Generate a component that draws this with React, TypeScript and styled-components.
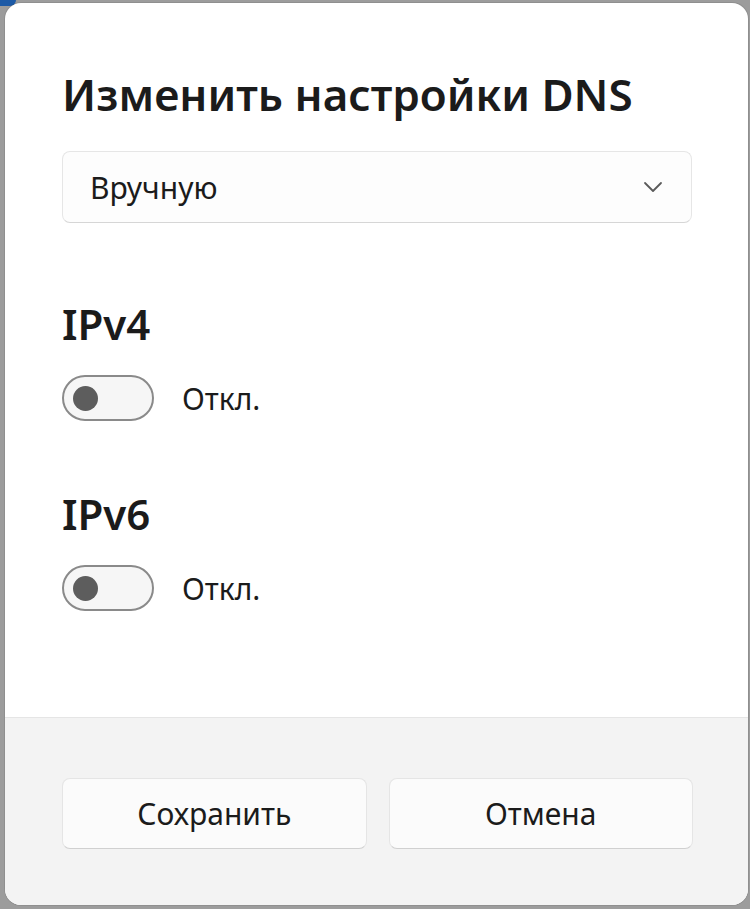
import React from "react";
import styled, {createGlobalStyle} from "styled-components";

const GlobalStyle = createGlobalStyle`
    html, body {
        margin: 0;
        padding: 0;
        width: 750px;
        height: 909px;
        overflow: hidden;
        background: #9c9c9c;
        font-family: "Noto Sans", "Open Sans", sans-serif;
    }
`;

const Backdrop = styled.div`
    position: relative;
    width: 750px;
    height: 909px;
    padding: 3px 2px 4px 5px;
    box-sizing: border-box;
`;

// bit of the blue window behind the dialog, top left
const BehindCorner = styled.div`
    position: absolute;
    left: 0;
    top: 0;
    width: 16px;
    height: 6px;
    background: #1d5aa6;
    border-bottom-right-radius: 8px;
`;

const Dialog = styled.div`
    position: relative;
    display: flex;
    flex-direction: column;
    height: 100%;
    background: #ffffff;
    border-radius: 16px;
    overflow: hidden;
    box-shadow: 0 0 0 1px rgba(0, 0, 0, 0.08);
`;

const Body = styled.div`
    flex: 1;
    display: flex;
    flex-direction: column;
    padding: 0 56px 0 57px;
`;

const Title = styled.h1`
    margin: 64px 0 0;
    font-size: 44px;
    font-weight: 600;
    line-height: 54px;
    color: #1b1b1b;
`;

const Select = styled.div`
    margin-top: 30px;
    height: 72px;
    display: flex;
    align-items: center;
    justify-content: space-between;
    padding: 0 28px 0 27px;
    box-sizing: border-box;
    background: #fdfdfd;
    border: 1px solid #e6e6e6;
    border-bottom-color: #d6d6d6;
    border-radius: 8px;
    font-size: 30px;
    color: #1b1b1b;
`;

const Section = styled.div`
    display: flex;
    flex-direction: column;
    margin-top: ${(p: {$top: number}) => p.$top}px;
`;

const Subtitle = styled.h2`
    margin: 0;
    font-size: 42px;
    font-weight: 600;
    line-height: 54px;
    color: #1b1b1b;
`;

const ToggleRow = styled.div`
    display: flex;
    align-items: center;
    gap: 28px;
    margin-top: 24px;
    font-size: 30px;
    color: #1b1b1b;
`;

const Track = styled.div`
    width: 92px;
    height: 46px;
    box-sizing: border-box;
    border: 2px solid #8a8a8a;
    border-radius: 23px;
    background: #f6f6f6;
    display: flex;
    align-items: center;
    padding-left: 9px;
`;

const Knob = styled.div`
    width: 25px;
    height: 25px;
    border-radius: 50%;
    background: #5d5d5d;
`;

const Footer = styled.div`
    height: 188px;
    box-sizing: border-box;
    background: #f3f3f3;
    border-top: 1px solid #e5e5e5;
    display: grid;
    grid-template-columns: 1fr 1fr;
    gap: 22px;
    padding: 60px 55px 0 57px;
    align-items: start;
`;

const Button = styled.button`
    height: 71px;
    background: #fbfbfb;
    border: 1px solid #e5e5e5;
    border-bottom-color: #d0d0d0;
    border-radius: 8px;
    font-family: inherit;
    font-size: 30px;
    color: #1b1b1b;
`;

const Chevron = () => (
    <svg width="20" height="12" viewBox="0 0 20 12" fill="none">
        <path d="M2 2l8 8 8-8" stroke="#5a5a5a" strokeWidth="1.8" strokeLinecap="round" strokeLinejoin="round"/>
    </svg>
);

const Toggle = ({label}: {label: string}) => (
    <ToggleRow>
        <Track><Knob/></Track>
        <span>{label}</span>
    </ToggleRow>
);

export default function App() {
    return (
        <>
            <GlobalStyle/>
            <Backdrop>
                <BehindCorner/>
                <Dialog>
                    <Body>
                        <Title>Изменить настройки DNS</Title>
                        <Select>
                            <span>Вручную</span>
                            <Chevron/>
                        </Select>
                        <Section $top={74}>
                            <Subtitle>IPv4</Subtitle>
                            <Toggle label="Откл."/>
                        </Section>
                        <Section $top={66}>
                            <Subtitle>IPv6</Subtitle>
                            <Toggle label="Откл."/>
                        </Section>
                    </Body>
                    <Footer>
                        <Button>Сохранить</Button>
                        <Button>Отмена</Button>
                    </Footer>
                </Dialog>
            </Backdrop>
        </>
    );
}
